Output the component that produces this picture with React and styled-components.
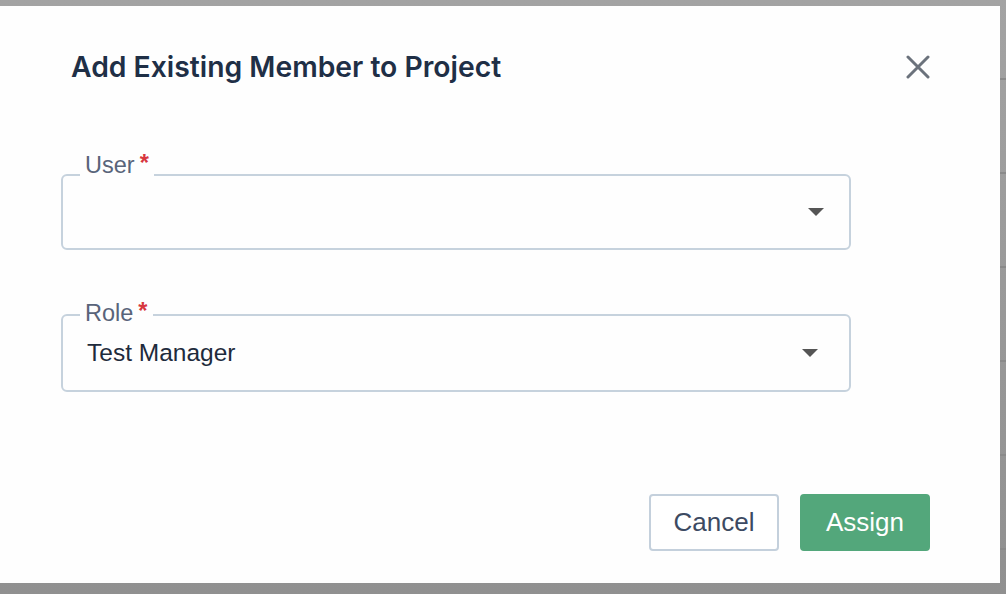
import React from 'react';
import styled, { createGlobalStyle } from 'styled-components';

const GlobalStyle = createGlobalStyle`
  html, body {
    margin: 0;
    padding: 0;
    height: 100%;
  }
  body {
    font-family: 'Liberation Sans', Arial, sans-serif;
    overflow: hidden;
  }
`;

// dimmed page behind the dialog
const Backdrop = styled.div`
  position: relative;
  width: 1006px;
  height: 594px;
  background: linear-gradient(to bottom, #a3a3a3, #909090);
  overflow: hidden;
`;

const Rows = styled.div`
  display: flex;
  flex-direction: column;
  padding-top: 78px;
`;

const Row = styled.div`
  height: 92px;
  border-top: 2px solid #8a8a8a;
`;

const Modal = styled.div`
  position: absolute;
  left: 0;
  top: 6px;
  width: 1000px;
  height: 577px;
  background: #fefefe;
  display: flex;
  flex-direction: column;
`;

const Header = styled.div`
  height: 122px;
  display: flex;
  align-items: center;
  justify-content: space-between;
  padding: 0 70px 0 71px;
`;

const Title = styled.h2`
  margin: 0;
  font-family: Inter, 'Liberation Sans', sans-serif;
  font-size: 28.3px;
  font-weight: 600;
  color: #1f2f46;
`;

const CloseButton = styled.button`
  border: none;
  background: none;
  padding: 0;
  width: 24px;
  height: 24px;
  display: flex;
  cursor: pointer;
  color: #6b727c;
`;

const Body = styled.div`
  display: flex;
  flex-direction: column;
  gap: 64px;
  padding: 46px 0 0 61px;
`;

const Field = styled.div`
  position: relative;
  box-sizing: border-box;
  width: 790px;
  height: ${p => p.h}px;
  border: 2px solid #c6d2dd;
  border-radius: 6px;
  display: flex;
  align-items: center;
  padding: 0 24px;
`;

const Label = styled.span`
  position: absolute;
  left: 17px;
  top: ${p => p.top}px;
  padding: 0 5px;
  background: #fefefe;
  font-size: 23.5px;
  line-height: 30px;
  color: #59647a;
`;

const Required = styled.span`
  color: #d7373f;
  font-weight: 700;
  margin-left: 5px;
  vertical-align: 2px;
`;

const Value = styled.span`
  font-size: 24.5px;
  color: #1e2b3c;
  flex: 1;
`;

const Arrow = styled.span`
  width: 0;
  height: 0;
  border-left: 8px solid transparent;
  border-right: 8px solid transparent;
  border-top: 8px solid #555;
  margin-right: ${p => p.offset}px;
`;

const Footer = styled.div`
  margin-top: auto;
  display: flex;
  justify-content: flex-end;
  gap: 21px;
  padding: 0 70px 32px 0;
`;

const Button = styled.button`
  box-sizing: border-box;
  width: 130px;
  height: 57px;
  border-radius: 4px;
  font-family: 'Liberation Sans', Arial, sans-serif;
  font-size: 26px;
  cursor: pointer;
  border: 2px solid ${p => (p.primary ? '#53a77b' : '#c4d0dc')};
  background: ${p => (p.primary ? '#53a77b' : '#fff')};
  color: ${p => (p.primary ? '#fff' : '#3c4a62')};
`;

const SelectField = ({ label, value, height, labelTop, arrowOffset }) => (
  <Field h={height}>
    <Label top={labelTop}>
      {label}
      <Required>*</Required>
    </Label>
    <Value>{value}</Value>
    <Arrow offset={arrowOffset} />
  </Field>
);

export default function App() {
  return (
    <>
      <GlobalStyle />
      <Backdrop>
        <Rows>
          {[0, 1, 2, 3, 4, 5].map(i => (
            <Row key={i} />
          ))}
        </Rows>
        <Modal>
          <Header>
            <Title>Add Existing Member to Project</Title>
            <CloseButton aria-label="Close">
              <svg width="24" height="24" viewBox="0 0 24 24">
                <path
                  d="M2 2 L22 22 M22 2 L2 22"
                  stroke="currentColor"
                  strokeWidth="3"
                  strokeLinecap="round"
                />
              </svg>
            </CloseButton>
          </Header>
          <Body>
            <SelectField label="User" value="" height={76} labelTop={-28} arrowOffset={1} />
            <SelectField label="Role" value="Test Manager" height={78} labelTop={-20} arrowOffset={7} />
          </Body>
          <Footer>
            <Button>Cancel</Button>
            <Button primary>Assign</Button>
          </Footer>
        </Modal>
      </Backdrop>
    </>
  );
}
